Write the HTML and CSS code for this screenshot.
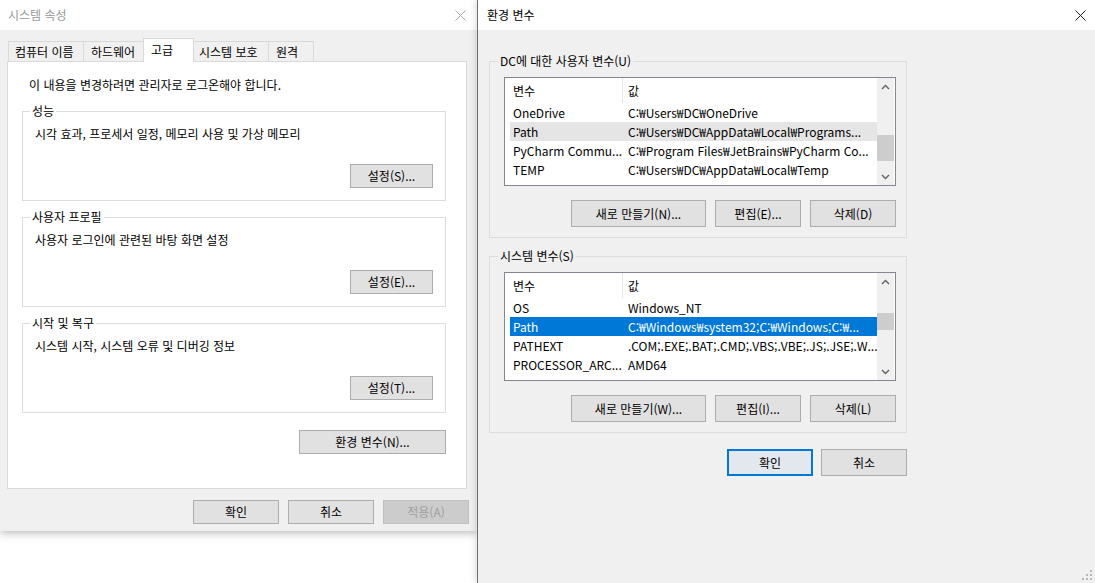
FILE: index.html
```html
<!DOCTYPE html>
<html lang="ko">
<head>
<meta charset="utf-8">
<title>시스템 속성 / 환경 변수</title>
<link rel="stylesheet" href="styles.css">
</head>
<body>
<div class="left-col">
  <div class="sys-dlg">
    <div class="titlebar inactive">
      <span class="title">시스템 속성</span>
      <svg class="close" width="11" height="11" viewBox="0 0 11 11"><path d="M0.5 0.5L10.5 10.5M10.5 0.5L0.5 10.5" stroke="#a6a6a6" stroke-width="1" fill="none"/></svg>
    </div>
    <div class="sys-body">
      <div class="tabs">
        <div class="tab t1">컴퓨터 이름</div>
        <div class="tab t2">하드웨어</div>
        <div class="tab t3 active">고급</div>
        <div class="tab t4">시스템 보호</div>
        <div class="tab t5">원격</div>
      </div>
      <div class="panel">
        <p class="note">이 내용을 변경하려면 관리자로 로그온해야 합니다.</p>
        <fieldset class="grp">
          <legend>성능</legend>
          <p class="desc">시각 효과, 프로세서 일정, 메모리 사용 및 가상 메모리</p>
          <div class="grp-actions"><button class="btn set">설정(S)...</button></div>
        </fieldset>
        <fieldset class="grp">
          <legend>사용자 프로필</legend>
          <p class="desc">사용자 로그인에 관련된 바탕 화면 설정</p>
          <div class="grp-actions"><button class="btn set">설정(E)...</button></div>
        </fieldset>
        <fieldset class="grp">
          <legend>시작 및 복구</legend>
          <p class="desc">시스템 시작, 시스템 오류 및 디버깅 정보</p>
          <div class="grp-actions"><button class="btn set">설정(T)...</button></div>
        </fieldset>
        <div class="env-row"><button class="btn env-btn">환경 변수(N)...</button></div>
      </div>
      <div class="sys-actions">
        <button class="btn dlg-btn">확인</button>
        <button class="btn dlg-btn">취소</button>
        <button class="btn dlg-btn disabled">적용(A)</button>
      </div>
    </div>
  </div>
</div>

<div class="env-dlg">
  <div class="titlebar">
    <span class="title">환경 변수</span>
    <svg class="close" width="11" height="11" viewBox="0 0 11 11"><path d="M0.5 0.5L10.5 10.5M10.5 0.5L0.5 10.5" stroke="#1a1a1a" stroke-width="1" fill="none"/></svg>
  </div>
  <div class="env-body">
    <fieldset class="vgrp">
      <legend>DC에 대한 사용자 변수(U)</legend>
      <div class="list">
        <div class="list-main">
          <div class="list-head"><span class="c1">변수</span><span class="c2">값</span></div>
          <div class="row"><span class="c1">OneDrive</span><span class="c2">C:₩Users₩DC₩OneDrive</span></div>
          <div class="row hover"><span class="c1">Path</span><span class="c2">C:₩Users₩DC₩AppData₩Local₩Programs...</span></div>
          <div class="row"><span class="c1">PyCharm Commu...</span><span class="c2">C:₩Program Files₩JetBrains₩PyCharm Co...</span></div>
          <div class="row"><span class="c1">TEMP</span><span class="c2">C:₩Users₩DC₩AppData₩Local₩Temp</span></div>
        </div>
        <div class="sb">
          <div class="sb-btn"><svg width="9" height="6" viewBox="0 0 9 6"><path d="M1 5L4.5 1.5L8 5" stroke="#606060" stroke-width="1.4" fill="none"/></svg></div>
          <div class="sb-track"><div class="thumb thumb-user"></div></div>
          <div class="sb-btn"><svg width="9" height="6" viewBox="0 0 9 6"><path d="M1 1L4.5 4.5L8 1" stroke="#606060" stroke-width="1.4" fill="none"/></svg></div>
        </div>
      </div>
      <div class="list-actions">
        <button class="btn vbtn wide">새로 만들기(N)...</button>
        <button class="btn vbtn">편집(E)...</button>
        <button class="btn vbtn">삭제(D)</button>
      </div>
    </fieldset>

    <fieldset class="vgrp second">
      <legend>시스템 변수(S)</legend>
      <div class="list">
        <div class="list-main">
          <div class="list-head"><span class="c1">변수</span><span class="c2">값</span></div>
          <div class="row"><span class="c1">OS</span><span class="c2">Windows_NT</span></div>
          <div class="row sel"><span class="c1">Path</span><span class="c2">C:₩Windows₩system32;C:₩Windows;C:₩...</span></div>
          <div class="row"><span class="c1">PATHEXT</span><span class="c2">.COM;.EXE;.BAT;.CMD;.VBS;.VBE;.JS;.JSE;.W...</span></div>
          <div class="row"><span class="c1">PROCESSOR_ARC...</span><span class="c2">AMD64</span></div>
        </div>
        <div class="sb">
          <div class="sb-btn"><svg width="9" height="6" viewBox="0 0 9 6"><path d="M1 5L4.5 1.5L8 5" stroke="#606060" stroke-width="1.4" fill="none"/></svg></div>
          <div class="sb-track"><div class="thumb thumb-sys"></div></div>
          <div class="sb-btn"><svg width="9" height="6" viewBox="0 0 9 6"><path d="M1 1L4.5 4.5L8 1" stroke="#606060" stroke-width="1.4" fill="none"/></svg></div>
        </div>
      </div>
      <div class="list-actions">
        <button class="btn vbtn wide">새로 만들기(W)...</button>
        <button class="btn vbtn">편집(I)...</button>
        <button class="btn vbtn">삭제(L)</button>
      </div>
    </fieldset>

    <div class="env-actions">
      <button class="btn vbtn default">확인</button>
      <button class="btn vbtn">취소</button>
    </div>
  </div>
  <svg class="grip" width="10" height="10" viewBox="0 0 10 10">
    <rect x="8" y="0" width="2" height="2" fill="#b8b8b8"/>
    <rect x="4" y="4" width="2" height="2" fill="#b8b8b8"/>
    <rect x="8" y="4" width="2" height="2" fill="#b8b8b8"/>
    <rect x="0" y="8" width="2" height="2" fill="#b8b8b8"/>
    <rect x="4" y="8" width="2" height="2" fill="#b8b8b8"/>
    <rect x="8" y="8" width="2" height="2" fill="#b8b8b8"/>
  </svg>
</div>
</body>
</html>
```

FILE: styles.css
```css
* { box-sizing: border-box; }

html, body {
  margin: 0;
  padding: 0;
}

body {
  width: 1095px;
  height: 583px;
  overflow: hidden;
  display: flex;
  background: #ffffff;
  font-family: "Noto Sans CJK KR", "Noto Sans", sans-serif;
  font-size: 12px;
  line-height: 16px;
  color: #000;
}

p { margin: 0; }

button {
  font-family: inherit;
  font-size: 12px;
  line-height: 16px;
  color: #000;
  padding: 0;
  margin: 0;
}

/* ---------- generic ---------- */
.titlebar {
  height: 30px;
  background: #ffffff;
  display: flex;
  align-items: center;
  justify-content: space-between;
}
.titlebar .title { color: #000; }
.titlebar.inactive .title { color: #999999; }

.btn {
  background: #e1e1e1;
  border: 1px solid #adadad;
  display: flex;
  align-items: center;
  justify-content: center;
}
.btn.disabled {
  background: #cccccc;
  border-color: #bfbfbf;
  color: #a0a0a0;
}

/* ---------- left : 시스템 속성 ---------- */
.left-col {
  width: 477px;
  flex: none;
}

.sys-dlg {
  width: 477px;
  height: 531px;
  background: #f0f0f0;
  box-shadow: 0 2px 8px rgba(0, 0, 0, 0.28);
  display: flex;
  flex-direction: column;
}
.sys-dlg .titlebar {
  padding: 0 11px 0 8px;
}

.sys-body {
  padding-top: 8px;
  display: flex;
  flex-direction: column;
}

.tabs {
  display: flex;
  align-items: flex-end;
  height: 23px;
  margin-left: 8px;
}
.tab {
  height: 20px;
  border: 1px solid #d9d9d9;
  border-bottom: none;
  background: #f0f0f0;
  display: flex;
  align-items: center;
  padding-left: 6px;
  white-space: nowrap;
}
.tab + .tab { margin-left: -1px; }
.tab.t1 { width: 76px; }
.tab.t2 { width: 61px; padding-left: 7px; }
.tab.t3 { width: 51px; padding-left: 7px; }
.tab.t4 { width: 76px; padding-left: 5px; }
.tab.t5 { width: 46px; padding-left: 7px; }
.tab.active {
  height: 24px;
  margin-bottom: -1px;
  background: #ffffff;
  position: relative;
  z-index: 1;
  align-items: flex-start;
  padding-top: 3px;
}

.panel {
  margin-left: 7px;
  width: 460px;
  height: 428px;
  background: #ffffff;
  border: 1px solid #d9d9d9;
  padding: 15px 20px 0 14px;
}
.note {
  margin-left: 7px;
}

.grp {
  margin: 10px 0 0 0;
  width: 424px;
  border: 1px solid #dcdcdc;
  padding: 0 12px 12px 12px;
  min-width: 0;
}
.grp + .grp { margin-top: 8px; }
.grp legend {
  padding: 0 2px;
  margin-left: -5px;
  line-height: 16px;
}
.desc {
  margin-top: 7px;
}
.grp-actions {
  display: flex;
  justify-content: flex-end;
  margin-top: 22px;
}
.btn.set {
  width: 83px;
  height: 24px;
}

.env-row {
  display: flex;
  justify-content: flex-end;
  margin-top: 17px;
}
.btn.env-btn {
  width: 147px;
  height: 24px;
}

.sys-actions {
  display: flex;
  justify-content: flex-end;
  gap: 9px;
  margin-top: 11px;
  padding-right: 8px;
}
.btn.dlg-btn {
  width: 86px;
  height: 24px;
}

/* ---------- right : 환경 변수 ---------- */
.env-dlg {
  flex: 1;
  position: relative;
  z-index: 2;
  background: #f0f0f0;
  border-left: 1px solid #6e6e6e;
  box-shadow: -2px 0 6px rgba(0, 0, 0, 0.12);
  display: flex;
  flex-direction: column;
}
.env-dlg .titlebar {
  padding: 0 9px 0 9px;
}

.env-body {
  padding: 23px 0 0 11px;
  display: flex;
  flex-direction: column;
}

.vgrp {
  margin: 0;
  width: 418px;
  border: 1px solid #dcdcdc;
  padding: 0 10px 10px 14px;
  min-width: 0;
}
.vgrp.second { margin-top: 10px; }
.vgrp legend {
  padding: 0 2px;
  margin-left: -6px;
  line-height: 16px;
}

.list {
  margin-top: 8px;
  width: 392px;
  height: 109px;
  border: 1px solid #828790;
  background: #ffffff;
  display: flex;
  overflow: hidden;
}
.list-main {
  flex: 1;
  min-width: 0;
  padding-left: 5px;
  overflow: hidden;
}
.list-head,
.row {
  display: flex;
  align-items: center;
  white-space: nowrap;
}
.list-head { height: 25px; }
.row { height: 19px; }
.c1 {
  width: 112px;
  flex: none;
  padding-left: 3px;
  overflow: hidden;
}
.c2 {
  flex: 1;
  min-width: 0;
  padding-left: 6px;
  overflow: hidden;
}
.list-head .c2 {
  border-left: 1px solid #e5e5e5;
  padding-left: 5px;
  align-self: stretch;
  display: flex;
  align-items: center;
}
.row.hover { background: #e5e5e5; }
.row.sel { background: #0078d7; color: #ffffff; }

.sb {
  width: 17px;
  margin-right: 1px;
  flex: none;
  background: #f0f0f0;
  display: flex;
  flex-direction: column;
}
.sb-btn {
  height: 17px;
  display: flex;
  align-items: center;
  justify-content: center;
}
.sb-track { flex: 1; }
.thumb {
  background: #cdcdcd;
  width: 17px;
}
.thumb-user { margin-top: 40px; height: 26px; }
.thumb-sys { margin-top: 23px; height: 17px; }

.list-actions {
  display: flex;
  justify-content: flex-end;
  gap: 9px;
  margin-top: 14px;
}
.btn.vbtn {
  width: 86px;
  height: 27px;
}
.btn.vbtn.wide { width: 135px; }

.env-actions {
  width: 418px;
  display: flex;
  justify-content: flex-end;
  gap: 8px;
  margin-top: 16px;
}
.btn.vbtn.default {
  border: 2px solid #0078d7;
  background: #e3e8ee;
}

.grip {
  position: absolute;
  right: 3px;
  bottom: 3px;
}
```
